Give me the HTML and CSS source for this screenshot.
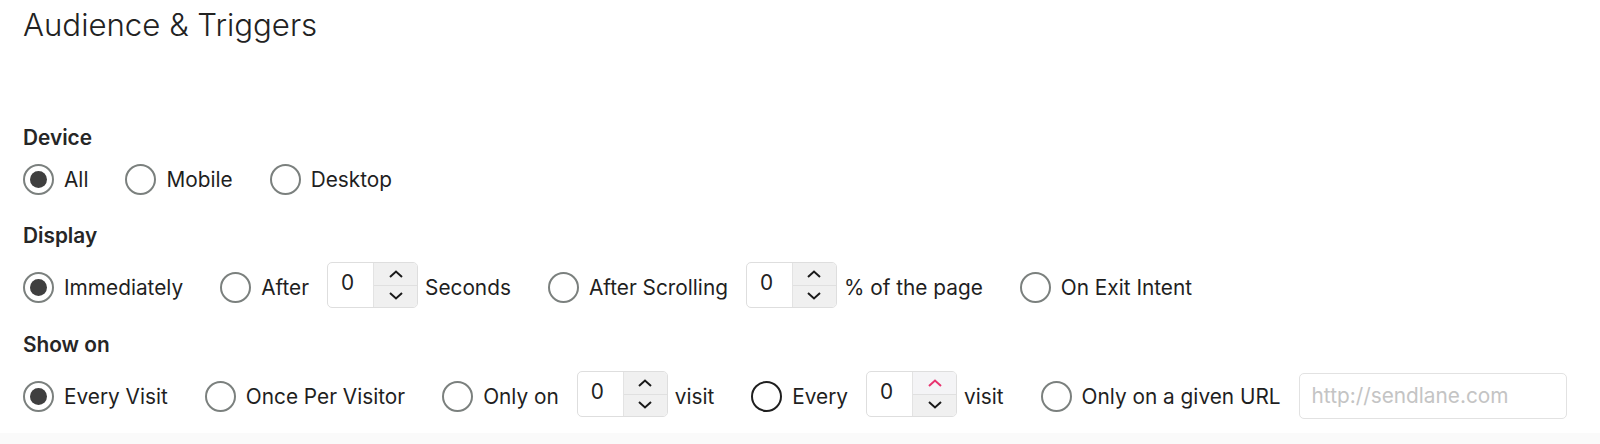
FILE: index.html
```html
<!DOCTYPE html>
<html lang="en">
<head>
  <meta charset="UTF-8">
  <title>Audience &amp; Triggers</title>
  <meta name="viewport" content="width=device-width, initial-scale=1.0">
  <link rel="stylesheet" href="styles.css">
</head>
<body>

  <div class="pannello">
    <h1>Audience &amp; Triggers</h1>

    <div class="gruppo gruppo-device">
      <p class="etichetta">Device</p>
      <div class="opzioni">
        <label class="opzione"><span class="radio checked"></span>All</label>
        <label class="opzione"><span class="radio"></span>Mobile</label>
        <label class="opzione"><span class="radio"></span>Desktop</label>
      </div>
    </div>

    <div class="gruppo gruppo-display">
      <p class="etichetta">Display</p>
      <div class="opzioni">
        <label class="opzione"><span class="radio checked"></span>Immediately</label>
        <label class="opzione"><span class="radio"></span>After
          <span class="spinner">
            <span class="spinner-valore">0</span>
            <span class="spinner-frecce">
              <span class="freccia"><svg width="14" height="8" viewBox="0 0 14 8"><path d="M1 7 L7 1.5 L13 7" /></svg></span>
              <span class="freccia"><svg width="14" height="8" viewBox="0 0 14 8"><path d="M1 1 L7 6.5 L13 1" /></svg></span>
            </span>
          </span>Seconds</label>
        <label class="opzione"><span class="radio"></span>After Scrolling
          <span class="spinner">
            <span class="spinner-valore">0</span>
            <span class="spinner-frecce">
              <span class="freccia"><svg width="14" height="8" viewBox="0 0 14 8"><path d="M1 7 L7 1.5 L13 7" /></svg></span>
              <span class="freccia"><svg width="14" height="8" viewBox="0 0 14 8"><path d="M1 1 L7 6.5 L13 1" /></svg></span>
            </span>
          </span>% of the page</label>
        <label class="opzione"><span class="radio"></span>On Exit Intent</label>
      </div>
    </div>

    <div class="gruppo gruppo-show">
      <p class="etichetta">Show on</p>
      <div class="opzioni">
        <label class="opzione"><span class="radio checked"></span>Every Visit</label>
        <label class="opzione"><span class="radio"></span>Once Per Visitor</label>
        <label class="opzione"><span class="radio"></span>Only on
          <span class="spinner">
            <span class="spinner-valore">0</span>
            <span class="spinner-frecce">
              <span class="freccia"><svg width="14" height="8" viewBox="0 0 14 8"><path d="M1 7 L7 1.5 L13 7" /></svg></span>
              <span class="freccia"><svg width="14" height="8" viewBox="0 0 14 8"><path d="M1 1 L7 6.5 L13 1" /></svg></span>
            </span>
          </span>visit</label>
        <label class="opzione"><span class="radio attivo"></span>Every
          <span class="spinner">
            <span class="spinner-valore">0</span>
            <span class="spinner-frecce">
              <span class="freccia hover"><svg width="14" height="8" viewBox="0 0 14 8"><path d="M1 7 L7 1.5 L13 7" /></svg></span>
              <span class="freccia"><svg width="14" height="8" viewBox="0 0 14 8"><path d="M1 1 L7 6.5 L13 1" /></svg></span>
            </span>
          </span>visit</label>
        <label class="opzione"><span class="radio"></span>Only on a given URL
          <input class="campo-url" type="text" placeholder="http://sendlane.com">
        </label>
      </div>
    </div>
  </div>

  <div class="piede"></div>

</body>
</html>
```

FILE: styles.css
```css
body {
  margin: 0;
  padding: 0;
  font-family: Inter, "Noto Sans", sans-serif;
  font-size: 20.8px;
  color: #1f1f1f;
  background: #ffffff;
}

.pannello {
  padding: 0 0 0 23px;
}

h1 {
  margin: 0;
  padding-top: 7px;
  font-size: 31.2px;
  line-height: 36px;
  font-weight: 300;
  color: #222;
}

.gruppo-device {
  margin-top: 83px;
}

.gruppo-display {
  margin-top: 29px;
}

.gruppo-show {
  margin-top: 20px;
}

.etichetta {
  margin: 0 0 14px;
  font-size: 20.8px;
  line-height: 24px;
  font-weight: 600;
  color: #262626;
}

.opzioni {
  display: flex;
  align-items: center;
}

.opzione {
  display: flex;
  align-items: center;
  margin-right: 37px;
  line-height: 24px;
  white-space: nowrap;
}

.radio {
  box-sizing: border-box;
  width: 31px;
  height: 31px;
  margin-right: 10px;
  border: 2.5px solid #7b807e;
  border-radius: 50%;
  display: flex;
  align-items: center;
  justify-content: center;
  flex-shrink: 0;
}

.radio.checked::after {
  content: "";
  width: 17px;
  height: 17px;
  border-radius: 50%;
  background: #3f3f3f;
}

.radio.attivo {
  border-color: #1f1f1f;
}

.spinner {
  box-sizing: border-box;
  display: flex;
  width: 91px;
  height: 46px;
  margin: 0 7px 5px 18px;
  border: 1px solid #dedede;
  border-radius: 5px;
  overflow: hidden;
  background: #fff;
}

.spinner-valore {
  width: 45px;
  padding-left: 13px;
  box-sizing: border-box;
  line-height: 40px;
  color: #222;
}

.spinner-frecce {
  flex: 1;
  display: flex;
  flex-direction: column;
  border-left: 1px solid #e3e3e3;
  background: #f0f0f0;
}

.freccia {
  flex: 1;
  display: flex;
  align-items: center;
  justify-content: center;
}

.freccia + .freccia {
  border-top: 1px solid #e0e0e0;
}

.freccia svg path {
  fill: none;
  stroke: #1a1a1a;
  stroke-width: 2;
}

.freccia.hover {
  background: #f4f4f6;
}

.freccia.hover svg path {
  stroke: #e8336f;
}

.campo-url {
  box-sizing: border-box;
  width: 268px;
  height: 46px;
  margin-left: 18px;
  margin-bottom: 2px;
  padding: 0 12px;
  border: 1px solid #e2e2e2;
  border-radius: 5px;
  font-family: Inter, "Noto Sans", sans-serif;
  font-size: 20.8px;
  color: #222;
}

.campo-url::placeholder {
  color: #c4c4c4;
}

.piede {
  margin-top: 11px;
  height: 20px;
  background: #fafafa;
}
```
